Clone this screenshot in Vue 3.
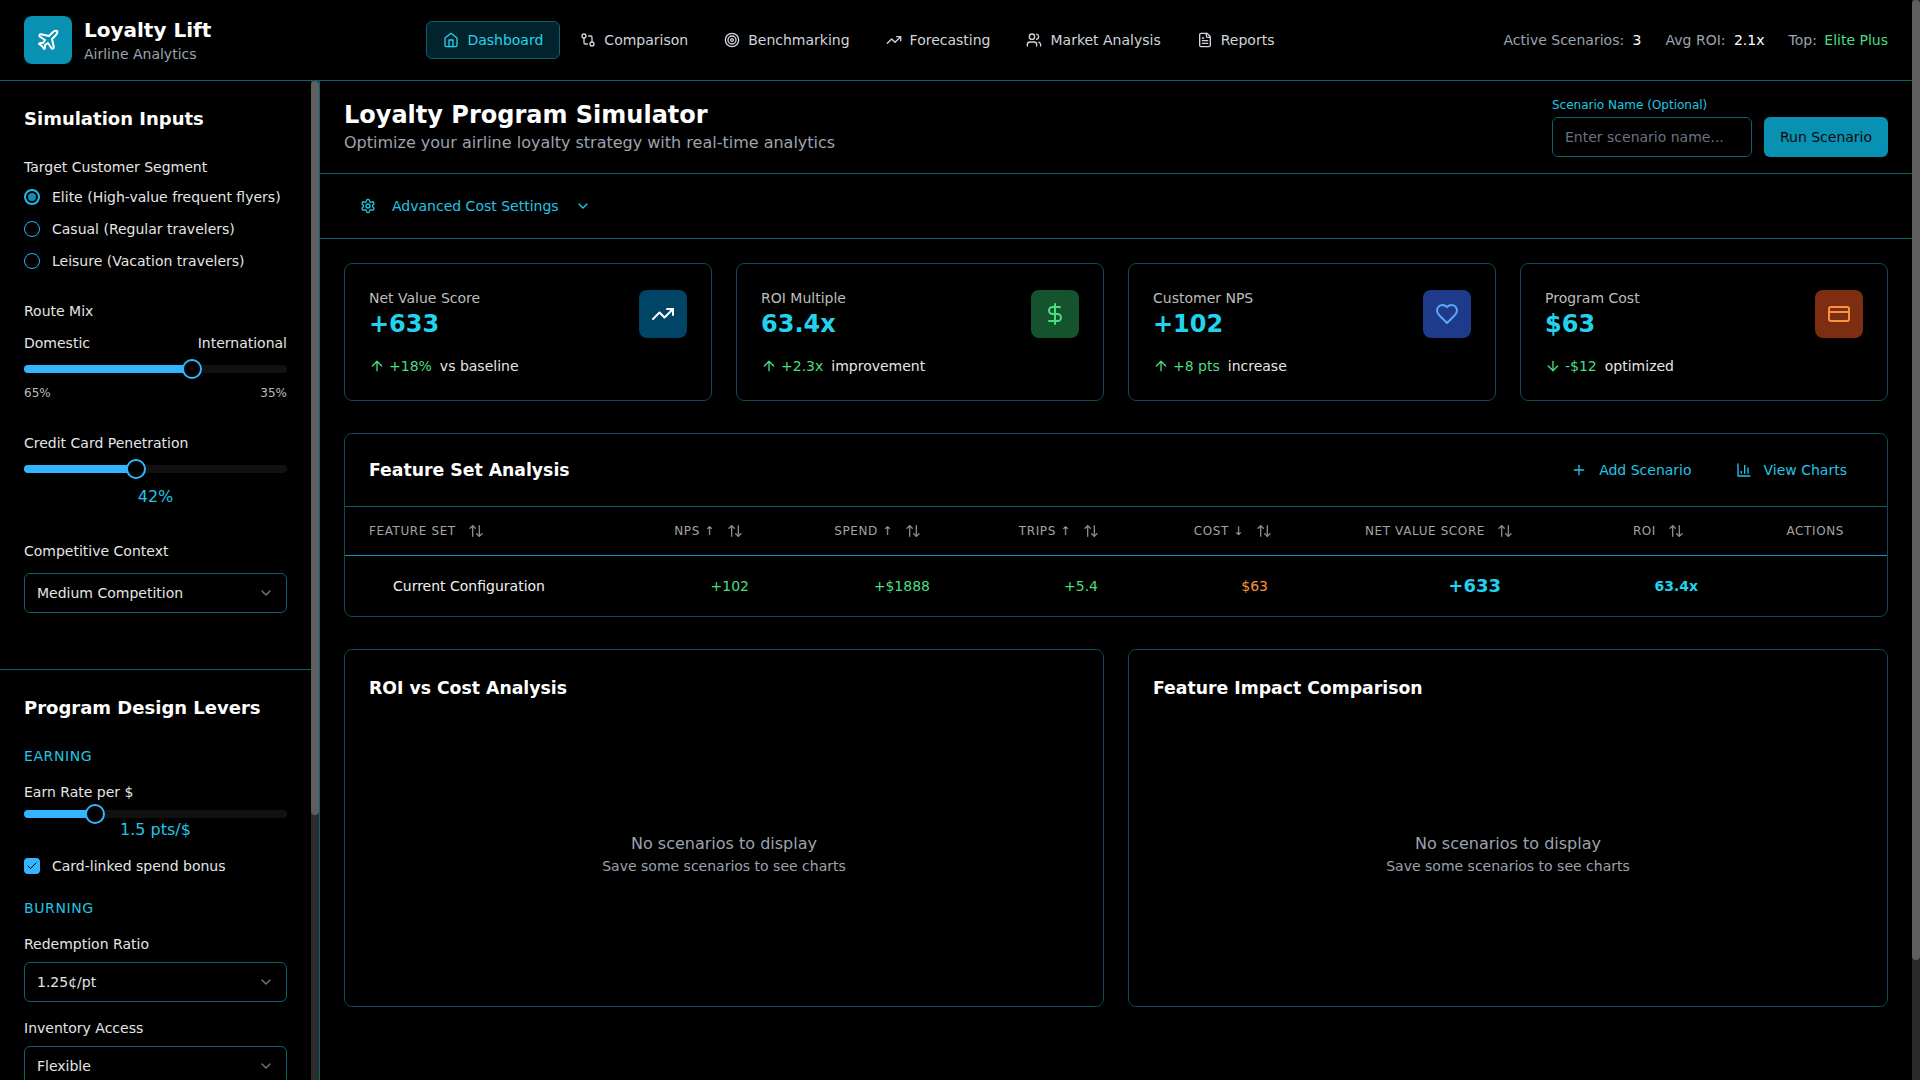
<template>
  <div class="app">
    <div class="page">
      <header class="topbar">
        <div class="brand">
          <div class="logo"><Icon name="plane" :size="24" /></div>
          <div>
            <div class="brand-name">Loyalty Lift</div>
            <div class="brand-sub">Airline Analytics</div>
          </div>
        </div>
        <nav class="nav">
          <a v-for="n in navItems" :key="n.label" :class="['nav-item', { active: n.active }]">
            <Icon :name="n.icon" :size="16" />
            <span>{{ n.label }}</span>
          </a>
        </nav>
        <div class="stats">
          <span>Active Scenarios: <b>3</b></span>
          <span>Avg ROI: <b>2.1x</b></span>
          <span>Top: <b class="green">Elite Plus</b></span>
        </div>
      </header>

      <div class="body">
        <aside class="sidebar">
          <div class="side-scroll">
            <section class="side-section first">
              <h3>Simulation Inputs</h3>
              <div class="field-label">Target Customer Segment</div>
              <div class="radios">
                <label v-for="s in segments" :key="s.label" class="radio-row">
                  <span :class="['radio', { on: s.on }]"></span>
                  <span>{{ s.label }}</span>
                </label>
              </div>

              <div class="field-label route">Route Mix</div>
              <div class="split-labels"><span>Domestic</span><span>International</span></div>
              <div class="slider"><div class="fill" :style="{ width: '168px' }"></div><div class="thumb" :style="{ left: '168px' }"></div></div>
              <div class="split-values"><span>65%</span><span>35%</span></div>

              <div class="field-label credit">Credit Card Penetration</div>
              <div class="slider"><div class="fill" :style="{ width: '112px' }"></div><div class="thumb" :style="{ left: '112px' }"></div></div>
              <div class="slider-value">42%</div>

              <div class="field-label context">Competitive Context</div>
              <div class="select"><span>Medium Competition</span><Icon name="chevron" :size="16" /></div>
            </section>

            <section class="side-section second">
              <h3>Program Design Levers</h3>
              <div class="group-title">EARNING</div>
              <div class="field-label earn">Earn Rate per $</div>
              <div class="slider near"><div class="fill" :style="{ width: '71px' }"></div><div class="thumb" :style="{ left: '71px' }"></div></div>
              <div class="slider-value tight">1.5 pts/$</div>
              <label class="check-row">
                <span class="check"><Icon name="check" :size="12" /></span>
                <span>Card-linked spend bonus</span>
              </label>
              <div class="group-title burn">BURNING</div>
              <div class="field-label ratio">Redemption Ratio</div>
              <div class="select near"><span>1.25¢/pt</span><Icon name="chevron" :size="16" /></div>
              <div class="field-label inventory">Inventory Access</div>
              <div class="select near"><span>Flexible</span><Icon name="chevron" :size="16" /></div>
            </section>
          </div>
          <div class="scroll-track"><div class="scroll-thumb side-thumb"></div></div>
        </aside>

        <main class="main">
          <div class="page-head">
            <div>
              <h1>Loyalty Program Simulator</h1>
              <p>Optimize your airline loyalty strategy with real-time analytics</p>
            </div>
            <div class="scenario">
              <div class="scenario-field">
                <label>Scenario Name (Optional)</label>
                <input placeholder="Enter scenario name..." />
              </div>
              <button class="run-btn">Run Scenario</button>
            </div>
          </div>

          <div class="advanced">
            <Icon name="settings" :size="16" />
            <span>Advanced Cost Settings</span>
            <Icon name="chevron" :size="16" />
          </div>

          <div class="content">
            <div class="kpis">
              <div v-for="k in kpis" :key="k.label" class="kpi">
                <div class="kpi-top">
                  <div>
                    <div class="kpi-label">{{ k.label }}</div>
                    <div class="kpi-value">{{ k.value }}</div>
                  </div>
                  <div class="kpi-icon" :class="k.tone"><Icon :name="k.icon" :size="24" /></div>
                </div>
                <div class="kpi-delta">
                  <Icon :name="k.arrow" :size="16" />
                  <span class="green">{{ k.delta }}</span>
                  <span>{{ k.note }}</span>
                </div>
              </div>
            </div>

            <div class="panel table-panel">
              <div class="panel-head">
                <h2>Feature Set Analysis</h2>
                <div class="panel-actions">
                  <a class="ghost"><Icon name="plus" :size="16" /><span>Add Scenario</span></a>
                  <a class="ghost"><Icon name="bars" :size="16" /><span>View Charts</span></a>
                </div>
              </div>
              <table>
                <colgroup>
                  <col v-for="(c, i) in columns" :key="i" :style="{ width: c.width + 'px' }" />
                </colgroup>
                <thead>
                  <tr>
                    <th v-for="c in columns" :key="c.label" :style="{ paddingRight: c.pad + 'px' }">
                      <span class="th-inner">
                        {{ c.label }}
                        <Icon v-if="c.sort" name="sort" :size="16" />
                      </span>
                    </th>
                  </tr>
                </thead>
                <tbody>
                  <tr>
                    <td class="name">Current Configuration</td>
                    <td class="green">+102</td>
                    <td class="green">+$1888</td>
                    <td class="green">+5.4</td>
                    <td class="orange">$63</td>
                    <td class="score">+633</td>
                    <td class="roi">63.4x</td>
                    <td></td>
                  </tr>
                </tbody>
              </table>
            </div>

            <div class="charts">
              <div v-for="t in chartTitles" :key="t" class="panel chart">
                <h2>{{ t }}</h2>
                <div class="empty">
                  <div class="empty-title">No scenarios to display</div>
                  <div class="empty-sub">Save some scenarios to see charts</div>
                </div>
              </div>
            </div>
          </div>
        </main>
      </div>
    </div>
    <div class="scroll-track"><div class="scroll-thumb page-thumb"></div></div>
  </div>
</template>

<script setup>
import { h } from 'vue'

const iconPaths = {
  plane: ['M17.8 19.2 16 11l3.5-3.5C21 6 21.5 4 21 3c-1-.5-3 0-4.5 1.5L13 8 4.8 6.2c-.5-.1-.9.1-1.1.5l-.3.5c-.2.5-.1 1 .3 1.3L9 12l-2 3H4l-1 1 3 2 2 3 1-1v-3l3-2 3.5 5.3c.3.4.8.5 1.3.3l.5-.2c.4-.3.6-.7.5-1.2z'],
  home: ['m3 9 9-7 9 7v11a2 2 0 0 1-2 2H5a2 2 0 0 1-2-2z', 'M9 22V12h6v10'],
  compare: ['M18 15a3 3 0 1 0 0 6 3 3 0 0 0 0-6', 'M6 3a3 3 0 1 0 0 6 3 3 0 0 0 0-6', 'M13 6h3a2 2 0 0 1 2 2v7', 'M11 18H8a2 2 0 0 1-2-2V9'],
  target: ['M12 2a10 10 0 1 0 0 20 10 10 0 0 0 0-20', 'M12 6a6 6 0 1 0 0 12 6 6 0 0 0 0-12', 'M12 10a2 2 0 1 0 0 4 2 2 0 0 0 0-4'],
  trend: ['m22 7-8.5 8.5-5-5L2 17', 'M16 7h6v6'],
  users: ['M16 21v-2a4 4 0 0 0-4-4H6a4 4 0 0 0-4 4v2', 'M9 3a4 4 0 1 0 0 8 4 4 0 0 0 0-8', 'M22 21v-2a4 4 0 0 0-3-3.87', 'M16 3.13a4 4 0 0 1 0 7.75'],
  file: ['M15 2H6a2 2 0 0 0-2 2v16a2 2 0 0 0 2 2h12a2 2 0 0 0 2-2V7Z', 'M14 2v4a2 2 0 0 0 2 2h4', 'M10 9H8', 'M16 13H8', 'M16 17H8'],
  settings: ['M12.22 2h-.44a2 2 0 0 0-2 2v.18a2 2 0 0 1-1 1.73l-.43.25a2 2 0 0 1-2 0l-.15-.08a2 2 0 0 0-2.73.73l-.22.38a2 2 0 0 0 .73 2.73l.15.1a2 2 0 0 1 1 1.72v.51a2 2 0 0 1-1 1.74l-.15.09a2 2 0 0 0-.73 2.73l.22.38a2 2 0 0 0 2.73.73l.15-.08a2 2 0 0 1 2 0l.43.25a2 2 0 0 1 1 1.73V20a2 2 0 0 0 2 2h.44a2 2 0 0 0 2-2v-.18a2 2 0 0 1 1-1.73l.43-.25a2 2 0 0 1 2 0l.15.08a2 2 0 0 0 2.73-.73l.22-.39a2 2 0 0 0-.73-2.73l-.15-.08a2 2 0 0 1-1-1.74v-.5a2 2 0 0 1 1-1.74l.15-.09a2 2 0 0 0 .73-2.73l-.22-.38a2 2 0 0 0-2.73-.73l-.15.08a2 2 0 0 1-2 0l-.43-.25a2 2 0 0 1-1-1.73V4a2 2 0 0 0-2-2z', 'M12 9a3 3 0 1 0 0 6 3 3 0 0 0 0-6'],
  chevron: ['m6 9 6 6 6-6'],
  dollar: ['M12 2v20', 'M17 5H9.5a3.5 3.5 0 0 0 0 7h5a3.5 3.5 0 0 1 0 7H6'],
  heart: ['M19 14c1.49-1.46 3-3.21 3-5.5A5.5 5.5 0 0 0 16.5 3c-1.76 0-3 .5-4.5 2-1.5-1.5-2.74-2-4.5-2A5.5 5.5 0 0 0 2 8.5c0 2.3 1.5 4.05 3 5.5l7 7Z'],
  card: ['M4 5h16a2 2 0 0 1 2 2v10a2 2 0 0 1-2 2H4a2 2 0 0 1-2-2V7a2 2 0 0 1 2-2z', 'M2 10h20'],
  up: ['m5 12 7-7 7 7', 'M12 19V5'],
  down: ['M12 5v14', 'm19 12-7 7-7-7'],
  plus: ['M5 12h14', 'M12 5v14'],
  bars: ['M3 3v18h18', 'M18 17V9', 'M13 17V5', 'M8 17v-3'],
  sort: ['m21 16-4 4-4-4', 'M17 20V4', 'm3 8 4-4 4 4', 'M7 4v16'],
  check: ['M20 6 9 17l-5-5'],
}

const Icon = (props) =>
  h(
    'svg',
    {
      width: props.size,
      height: props.size,
      viewBox: '0 0 24 24',
      fill: 'none',
      stroke: 'currentColor',
      'stroke-width': 2,
      'stroke-linecap': 'round',
      'stroke-linejoin': 'round',
      style: 'flex-shrink:0;display:block',
    },
    iconPaths[props.name].map((d) => h('path', { d })),
  )
Icon.props = ['name', 'size']

const navItems = [
  { label: 'Dashboard', icon: 'home', active: true },
  { label: 'Comparison', icon: 'compare' },
  { label: 'Benchmarking', icon: 'target' },
  { label: 'Forecasting', icon: 'trend' },
  { label: 'Market Analysis', icon: 'users' },
  { label: 'Reports', icon: 'file' },
]

const segments = [
  { label: 'Elite (High-value frequent flyers)', on: true },
  { label: 'Casual (Regular travelers)' },
  { label: 'Leisure (Vacation travelers)' },
]

const kpis = [
  { label: 'Net Value Score', value: '+633', icon: 'trend', tone: 'sky', arrow: 'up', delta: '+18%', note: 'vs baseline' },
  { label: 'ROI Multiple', value: '63.4x', icon: 'dollar', tone: 'emerald', arrow: 'up', delta: '+2.3x', note: 'improvement' },
  { label: 'Customer NPS', value: '+102', icon: 'heart', tone: 'blue', arrow: 'up', delta: '+8 pts', note: 'increase' },
  { label: 'Program Cost', value: '$63', icon: 'card', tone: 'rust', arrow: 'down', delta: '-$12', note: 'optimized' },
]

const columns = [
  { label: 'FEATURE SET', width: 275, sort: true },
  { label: 'NPS ↑', width: 153, pad: 30, sort: true },
  { label: 'SPEND ↑', width: 181, pad: 33, sort: true },
  { label: 'TRIPS ↑', width: 168, pad: 23, sort: true },
  { label: 'COST ↓', width: 170, pad: 20, sort: true },
  { label: 'NET VALUE SCORE', width: 233, pad: 12, sort: true },
  { label: 'ROI', width: 197, pad: 38, sort: true },
  { label: 'ACTIONS', width: 165, pad: 43 },
]

const chartTitles = ['ROI vs Cost Analysis', 'Feature Impact Comparison']
</script>

<style>
html, body { margin: 0; background: #000; }
</style>

<style scoped>
* { box-sizing: border-box; }

.app {
  font-family: "DejaVu Sans", sans-serif;
  font-size: 14px;
  line-height: 20px;
  color: #e5e5e5;
  background: #000;
  height: 1080px;
  overflow: hidden;
  display: flex;
}

.page { flex: 1; min-width: 0; }

/* the scrollbars are plain elements, the browser hides its own when photographed */
.scroll-track { width: 8px; flex-shrink: 0; height: 100%; background: #2b2b2b; }
.scroll-thumb { background: #5f5f5f; border-radius: 4px; }
.page-thumb { height: 960px; }
.side-thumb { height: 734px; }

.topbar {
  height: 81px;
  display: flex;
  align-items: center;
  justify-content: space-between;
  padding: 0 24px;
  border-bottom: 1px solid #0e5f70;
}

.brand { display: flex; align-items: center; gap: 12px; }
.logo {
  width: 48px;
  height: 48px;
  border-radius: 8px;
  background: #0891b2;
  color: #fff;
  display: flex;
  align-items: center;
  justify-content: center;
}
.brand-name { font-size: 20px; line-height: 28px; font-weight: 700; color: #fff; }
.brand-sub { color: #9ca3af; }

.nav { display: flex; gap: 4px; margin-left: 2px; }
.nav-item {
  display: flex;
  align-items: center;
  gap: 8px;
  height: 38px;
  padding: 0 16px;
  border-radius: 6px;
  color: #d1d5db;
}
.nav-item.active { color: #22d3ee; background: #03232c; border: 1px solid #0e5f70; }

.stats { display: flex; gap: 24px; color: #9ca3af; }
.stats b { font-weight: 400; color: #fff; margin-left: 4px; }
.stats b.green { color: #4ade80; margin-left: 3px; }
.green { color: #4ade80; }
.orange { color: #fb923c; }

.body { display: flex; align-items: flex-start; }

.sidebar {
  width: 320px;
  flex-shrink: 0;
  height: 999px;
  display: flex;
  overflow: hidden;
  border-right: 1px solid #0e5f70;
}
.side-scroll { flex: 1; min-width: 0; }

.side-section { padding: 24px; }
.side-section.first { border-bottom: 1px solid #0e5f70; height: 589px; }

h3 { margin: 0; font-size: 18px; line-height: 28px; font-weight: 700; color: #fff; }

.field-label { color: #e5e5e5; }
.first .field-label:first-of-type { margin-top: 24px; }
.radios { margin-top: 10px; display: flex; flex-direction: column; gap: 12px; }
.radio-row { display: flex; align-items: center; gap: 12px; }
.radio {
  width: 16px;
  height: 16px;
  border: 1px solid #22b8e6;
  border-radius: 50%;
  position: relative;
}
.radio.on { border-width: 2px; }
.radio.on::after {
  content: "";
  position: absolute;
  inset: 2px;
  border-radius: 50%;
  background: #0891b2;
}

.route { margin-top: 30px; }
.split-labels, .split-values { display: flex; justify-content: space-between; }
.split-labels { margin-top: 12px; }
.split-values { margin-top: 12px; font-size: 12px; line-height: 16px; color: #bdbdbd; }

.slider {
  position: relative;
  height: 8px;
  background: #111;
  border-radius: 4px;
  margin-top: 12px;
}
.slider.near { margin-top: 8px; }
.fill { position: absolute; left: 0; top: 0; bottom: 0; background: #33b5ff; border-radius: 4px; }
.thumb {
  position: absolute;
  top: -6px;
  width: 20px;
  height: 20px;
  margin-left: -10px;
  border-radius: 50%;
  border: 2px solid #33b5ff;
  background: #000;
}
.credit { margin-top: 32px; }
.slider-value { margin-top: 12px; text-align: center; font-size: 16px; line-height: 24px; color: #22c5e5; }
.slider-value.tight { margin-top: 0; }
.context { margin-top: 32px; }

.select {
  height: 40px;
  margin-top: 12px;
  padding: 0 12px;
  display: flex;
  align-items: center;
  justify-content: space-between;
  border: 1px solid #0e5f70;
  border-radius: 6px;
}
.select.near { margin-top: 8px; }
.select svg { color: #777; }

.group-title { color: #22c5e5; letter-spacing: 0.6px; }
.second h3 + .group-title { margin-top: 24px; }
.earn { margin-top: 16px; }
.check-row { display: flex; align-items: center; gap: 12px; margin-top: 14px; }
.check {
  width: 16px;
  height: 16px;
  border-radius: 4px;
  background: #33b5ff;
  color: #000;
  display: flex;
  align-items: center;
  justify-content: center;
}
.burn { margin-top: 22px; }
.ratio { margin-top: 16px; }
.inventory { margin-top: 16px; }

.main { flex: 1; min-width: 0; }

.page-head {
  height: 93px;
  padding: 0 24px;
  display: flex;
  align-items: center;
  justify-content: space-between;
  border-bottom: 1px solid #0e5f70;
}
h1 { margin: 0; font-size: 24px; line-height: 32px; font-weight: 700; color: #fff; }
.page-head p { margin: 0; font-size: 16px; line-height: 24px; color: #9ca3af; }
.scenario { display: flex; align-items: flex-end; gap: 12px; }
.scenario-field label { display: block; font-size: 12px; line-height: 16px; color: #22c5e5; margin-bottom: 4px; }
input {
  display: block;
  width: 200px;
  height: 40px;
  padding: 0 12px;
  background: #000;
  border: 1px solid #0e5f70;
  border-radius: 6px;
  font: 14px "DejaVu Sans", sans-serif;
  color: #e5e5e5;
  outline: none;
}
input::placeholder { color: #6b7280; }
.run-btn {
  height: 40px;
  width: 124px;
  border: 0;
  border-radius: 6px;
  background: #0891b2;
  color: #0a0a0a;
  font: 14px "DejaVu Sans", sans-serif;
}

.advanced {
  height: 65px;
  padding: 0 40px;
  display: flex;
  align-items: center;
  gap: 16px;
  color: #22c5e5;
  border-bottom: 1px solid #0e5f70;
}

.content { padding: 24px; }

.kpis { display: grid; grid-template-columns: repeat(4, 1fr); gap: 24px; }
.kpi { height: 138px; padding: 24px; border: 1px solid #0c4a58; border-radius: 8px; }
.kpi-top { display: flex; justify-content: space-between; align-items: flex-start; }
.kpi-label { color: #bdbdbd; }
.kpi-value { font-size: 24px; line-height: 32px; font-weight: 700; color: #22d3ee; }
.kpi-icon {
  width: 48px;
  height: 48px;
  margin-top: 2px;
  border-radius: 8px;
  display: flex;
  align-items: center;
  justify-content: center;
}
.sky { background: #004466; color: #fff; }
.emerald { background: #14532d; color: #4ade80; }
.blue { background: #1e3a8a; color: #60a5fa; }
.rust { background: #7c2d12; color: #fb923c; }
.kpi-delta { display: flex; align-items: center; gap: 8px; margin-top: 16px; }
.kpi-delta svg { color: #4ade80; margin-right: -4px; }

.panel { border: 1px solid #0c4a58; border-radius: 8px; }
.table-panel { margin-top: 32px; }
.panel-head {
  height: 73px;
  padding: 0 24px;
  display: flex;
  align-items: center;
  justify-content: space-between;
  border-bottom: 1px solid #0e5f70;
}
h2 { margin: 0; font-size: 17.28px; line-height: 28px; font-weight: 700; color: #fff; }
.panel-actions { display: flex; gap: 12px; }
.ghost { display: flex; align-items: center; gap: 12px; padding: 0 16px; color: #22c5e5; height: 36px; }

table { width: 100%; border-collapse: collapse; table-layout: fixed; }
th {
  height: 48px;
  font-size: 12px;
  font-weight: 400;
  letter-spacing: 0.6px;
  color: #a3a3a3;
  border-bottom: 1px solid #1593c0;
  padding: 0;
}
th:first-child { padding-left: 24px; }
.th-inner { display: flex; align-items: center; gap: 12px; justify-content: flex-end; }
th:first-child .th-inner { justify-content: flex-start; }
th svg { color: #8a8a8a; }
td { height: 61px; padding: 0 24px; text-align: right; }
td.name { text-align: left; padding-left: 48px; color: #f0f0f0; }
td.score { font-size: 18px; font-weight: 700; color: #22d3ee; }
td.roi { font-weight: 700; color: #22d3ee; }

.charts { display: grid; grid-template-columns: 1fr 1fr; gap: 24px; margin-top: 32px; }
.chart { height: 358px; padding: 24px; display: flex; flex-direction: column; }
.empty { flex: 1; padding-top: 24px; display: flex; flex-direction: column; align-items: center; justify-content: center; }
.empty-title { font-size: 16px; line-height: 24px; color: #9ca3af; }
.empty-sub { color: #9ca3af; }
</style>
